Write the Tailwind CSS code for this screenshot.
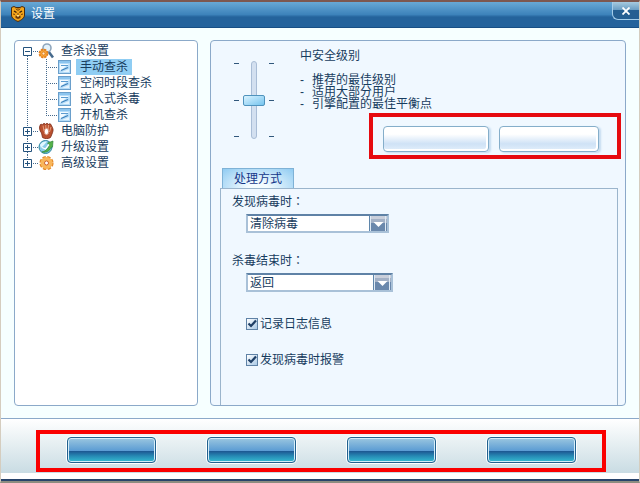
<!DOCTYPE html>
<html lang="zh-CN">
<head>
  <meta charset="UTF-8">
  <meta name="viewport" content="width=device-width, initial-scale=1">
  <title>设置</title>
  <script src="https://cdn.jsdelivr.net/npm/@tailwindcss/browser@4"></script>
</head>
<body class="flex min-h-screen flex-col border-t-2 border-r border-b-2 border-l border-t-[#7d5850] border-r-[#d5cdbf] border-b-[#8c8c80] border-l-[#d5cdbf] bg-[#f6ffff] font-['Liberation_Sans','Noto_Sans_CJK_SC',sans-serif] text-xs leading-4 text-[#173c5e]">

  <!-- SVG部品 -->
  <svg class="hidden">
    <symbol id="page" viewBox="0 0 13 14">
      <rect x=".5" y=".5" width="12" height="13" fill="#b5dcf8" stroke="#6a9fcb"/>
      <path d="M1 1h11v2H1z" fill="#8cc4ee"/>
      <path d="M2 4h9L2 11z" fill="#f2faff"/>
      <path d="M3 5.500h7" stroke="#5b9bd0"/>
      <path d="M3 10.500 10 7.500" stroke="#3c7fba" stroke-width="1.200"/>
      <path d="M11 9v3H4z" fill="#e6f4fd"/>
    </symbol>
    <symbol id="arrow" viewBox="0 0 18 15">
      <path d="M0 0h18v3H0z" fill="#c9cfdb"/>
      <path d="M0 3h18v4H0z" fill="#a3b1c6"/>
      <path d="M0 7h18v8H0z" fill="#6a88ac"/>
      <path d="M.5 0v15" stroke="#5f86ab"/>
      <path d="M1.500 0v15M16.500 0v15" stroke="#dfeaf4"/>
      <path d="M4.500 6h10l-5 5z" fill="#fff"/>
    </symbol>
    <symbol id="check" viewBox="0 0 12 12">
      <path d="M2.500 5.500 5 8l5-5.500" fill="none" stroke="#1f3f66" stroke-width="2.200"/>
    </symbol>
  </svg>

  <!-- タイトルバー -->
  <header class="flex h-[26px] items-start justify-between border-b border-[#174f85] bg-linear-to-b from-[#68a9d6] from-0% via-[#3d83bb] via-50% to-[#24639c] to-60%">
    <h1 class="flex items-center gap-1.5 pt-1 pl-2.5 text-white">
      <svg class="h-4 w-3.5" viewBox="0 0 14 16">
        <path d="M.5 1.500 3 .5l2 1h4l2-1 2.500 1V9c0 3-3 5-6.500 6.500C3.500 14 .5 12 .5 9z" fill="#f3a51c" stroke="#4b2a0c"/>
        <path d="m3 5 2.500 1.500M11 5 8.500 6.500" stroke="#3a1f08" stroke-width="1.400"/>
        <path d="M7 2v3M5 2.500l1 1.500M9 2.500 8 4M2 8l2 .5M12 8l-2 .5M7 7v2.500" stroke="#7a4208"/>
        <path d="M4.500 12V9.500L7 10.500l2.500-1V12L7 13z" fill="#6d3a0a"/>
        <path d="M6 9h2v1.500H6z" fill="#ffe28a"/>
      </svg>
      设置
    </h1>
    <button type="button" aria-label="关闭" class="flex h-[18px] w-[27px] items-center justify-center rounded-bl-md border-b border-l border-[#a4cdea] bg-linear-to-b from-[#a6cbe0] from-0% via-[#6c9fc4] via-45% to-[#255f92] to-50%">
      <svg class="size-2" viewBox="0 0 8 8"><path d="m.5.5 7 7m0-7-7 7" stroke="#fff" stroke-width="1.800"/></svg>
    </button>
  </header>

  <main class="flex flex-1 gap-3 px-[13px] pt-3 pb-3">

    <!-- ツリー -->
    <nav class="w-46 shrink-0 rounded border border-[#8ba9c9] bg-white pt-0.5 pl-2">
      <ul>
        <li>
          <div class="flex h-4 items-center">
            <button type="button" aria-label="折叠查杀设置">
              <svg class="h-4 w-[15px]" viewBox="0 0 15 16"><path d="M4.500 13v3M10 8.500h5" stroke="#45698c" stroke-dasharray="1 1"/><path d="M.5 4.500h8v8h-8zM2 8.500h5" fill="none" stroke="#24527d"/></svg>
            </button>
            <svg class="size-4" viewBox="0 0 16 16">
              <path d="m10.500 8.500 4.500 6" stroke="#476a8c" stroke-width="2.600"/>
              <circle cx="9" cy="5" r="4" fill="#e4f2fb" stroke="#8fa6bd" stroke-width="1.600"/>
              <circle cx="5.500" cy="10.500" r="4" fill="#f7a638" stroke="#e57f1d" stroke-width="1.800" stroke-dasharray="2.200 .95"/>
              <circle cx="5.500" cy="10.500" r="1.500" fill="#ffe9c4" stroke="#d56c14" stroke-width=".7"/>
            </svg>
            <span class="pl-[7px]">查杀设置</span>
          </div>
          <ul>
            <li class="flex h-4 items-center">
              <svg class="h-4 w-[35px]" viewBox="0 0 35 16"><path d="M4.500 0v16M23.500 0v16M25 8.500h9" stroke="#45698c" stroke-dasharray="1 1"/></svg>
              <svg class="h-3.5 w-[13px]"><use href="#page"/></svg>
              <a href="#" class="ml-[5px] bg-[#8fcdf3] px-1">手动查杀</a>
            </li>
            <li class="flex h-4 items-center">
              <svg class="h-4 w-[35px]" viewBox="0 0 35 16"><path d="M4.500 0v16M23.500 0v16M25 8.500h9" stroke="#45698c" stroke-dasharray="1 1"/></svg>
              <svg class="h-3.5 w-[13px]"><use href="#page"/></svg>
              <a href="#" class="ml-[5px] px-1">空闲时段查杀</a>
            </li>
            <li class="flex h-4 items-center">
              <svg class="h-4 w-[35px]" viewBox="0 0 35 16"><path d="M4.500 0v16M23.500 0v16M25 8.500h9" stroke="#45698c" stroke-dasharray="1 1"/></svg>
              <svg class="h-3.5 w-[13px]"><use href="#page"/></svg>
              <a href="#" class="ml-[5px] px-1">嵌入式杀毒</a>
            </li>
            <li class="flex h-4 items-center">
              <svg class="h-4 w-[35px]" viewBox="0 0 35 16"><path d="M4.500 0v16M23.500 0v9M25 8.500h9" stroke="#45698c" stroke-dasharray="1 1"/></svg>
              <svg class="h-3.5 w-[13px]"><use href="#page"/></svg>
              <a href="#" class="ml-[5px] px-1">开机查杀</a>
            </li>
          </ul>
        </li>
        <li class="flex h-4 items-center">
          <button type="button" aria-label="展开电脑防护">
            <svg class="h-4 w-[15px]" viewBox="0 0 15 16"><path d="M4.500 0v4M4.500 13v3M10 8.500h5" stroke="#45698c" stroke-dasharray="1 1"/><path d="M.5 4.500h8v8h-8zM2 8.500h5M4.500 6v5" fill="none" stroke="#24527d"/></svg>
          </button>
          <svg class="size-4" viewBox="0 0 16 16">
            <path d="M2 2.500C2 1 4 1 4.500 2 5 0 7 0 7.500 1.500 8 0 10 0 10.500 1.500 11 .5 13 .5 13.500 2.500L15 6c.5 2-1 5-2.500 8.500-2 1.500-6 1.500-8 0L3.500 10C1.500 8 1 4 2 2.500z" fill="#b9502f" stroke="#7c2b18" stroke-width=".8"/>
            <path d="M5 2.500 6 8M7.800 2v5M10.500 2 10 7.500M13 4l-1.500 5" stroke="#f0b090" stroke-width=".8"/>
            <ellipse cx="8.500" cy="8.500" rx="2.200" ry="3.300" fill="#fff" stroke="#d78b70"/>
          </svg>
          <span class="pl-[7px]">电脑防护</span>
        </li>
        <li class="flex h-4 items-center">
          <button type="button" aria-label="展开升级设置">
            <svg class="h-4 w-[15px]" viewBox="0 0 15 16"><path d="M4.500 0v4M4.500 13v3M10 8.500h5" stroke="#45698c" stroke-dasharray="1 1"/><path d="M.5 4.500h8v8h-8zM2 8.500h5M4.500 6v5" fill="none" stroke="#24527d"/></svg>
          </button>
          <svg class="size-4" viewBox="0 0 16 16">
            <circle cx="7.500" cy="8" r="6.500" fill="#8acbe8" stroke="#2b86a0"/>
            <path d="M2 6c1.500-3 4.500-4 7-3.500L6 6 3 9z" fill="#e2f7ff"/>
            <path d="M4 13c4 1 8-1 9-4.500l1.500-.5.5-6L9.500 4l1.500 1.500C11 9 8 12 4 13z" fill="#55b149" stroke="#2f8538" stroke-width=".7"/>
            <path d="M4 8.500 7.500 10 11 5.500" fill="none" stroke="#fff" stroke-width="1.300"/>
          </svg>
          <span class="pl-[7px]">升级设置</span>
        </li>
        <li class="flex h-4 items-center">
          <button type="button" aria-label="展开高级设置">
            <svg class="h-4 w-[15px]" viewBox="0 0 15 16"><path d="M4.500 0v4M10 8.500h5" stroke="#45698c" stroke-dasharray="1 1"/><path d="M.5 4.500h8v8h-8zM2 8.500h5M4.500 6v5" fill="none" stroke="#24527d"/></svg>
          </button>
          <svg class="size-4" viewBox="0 0 16 16">
            <circle cx="8.500" cy="8" r="6" fill="none" stroke="#e58a2a" stroke-width="2.200" stroke-dasharray="3.300 1.412"/>
            <circle cx="8.500" cy="8" r="4" fill="#fff" stroke="#f9b65a" stroke-width="4"/>
            <circle cx="8.500" cy="8" r="2" fill="#fff" stroke="#c9501a" stroke-width=".9"/>
          </svg>
          <span class="pl-[7px]">高级设置</span>
        </li>
      </ul>
    </nav>

    <!-- 設定パネル -->
    <form class="flex flex-1 flex-col rounded border border-[#8ba9c9] bg-[#f0f8ff]">
      <section class="flex">
        <div class="flex items-center gap-1 self-start pt-5 pl-[23px]">
          <div class="flex h-[74px] flex-col justify-between">
            <i class="h-px w-[5px] bg-[#31587c]"></i><i class="h-px w-[5px] bg-[#31587c]"></i><i class="h-px w-[5px] bg-[#31587c]"></i>
          </div>
          <input type="range" aria-label="安全级别" min="0" max="2" value="1" class="h-[78px] w-[22px] appearance-none bg-transparent [writing-mode:vertical-lr] [&::-webkit-slider-runnable-track]:h-[78px] [&::-webkit-slider-runnable-track]:w-1.5 [&::-webkit-slider-runnable-track]:rounded-sm [&::-webkit-slider-runnable-track]:border [&::-webkit-slider-runnable-track]:border-[#a9bdd6] [&::-webkit-slider-runnable-track]:bg-[#d3e0f0] [&::-webkit-slider-thumb]:-ml-[9px] [&::-webkit-slider-thumb]:h-[11px] [&::-webkit-slider-thumb]:w-[22px] [&::-webkit-slider-thumb]:appearance-none [&::-webkit-slider-thumb]:rounded-xs [&::-webkit-slider-thumb]:border [&::-webkit-slider-thumb]:border-[#4f93bd] [&::-webkit-slider-thumb]:bg-linear-to-br [&::-webkit-slider-thumb]:from-[#d9f3ff] [&::-webkit-slider-thumb]:to-[#74c4ee]">
          <div class="flex h-[74px] flex-col justify-between">
            <i class="h-px w-[5px] bg-[#31587c]"></i><i class="h-px w-[5px] bg-[#31587c]"></i><i class="h-px w-[5px] bg-[#31587c]"></i>
          </div>
        </div>
        <div class="flex flex-1 flex-col pt-[7px] pl-[26px]">
          <h2>中安全级别</h2>
          <ul class="mt-2.5 leading-3">
            <li class="flex"><span class="w-3">-</span>推荐的最佳级别</li>
            <li class="flex"><span class="w-3">-</span>适用大部分用户</li>
            <li class="flex"><span class="w-3">-</span>引擎配置的最佳平衡点</li>
          </ul>
          <div class="mt-[3px] mr-1 flex gap-2.5 self-end border-4 border-[#e60a0f] pt-[9px] pr-[18px] pb-[3px] pl-2.5">
            <button type="button" aria-label="自定义级别" class="h-[26px] w-[106px] rounded border border-[#85aeca] bg-linear-to-b from-white from-30% via-[#cfe2f6] via-70% to-[#e2effb] shadow-[inset_-1px_-1px_0_1px_#fff,2px_1px_2px_#c5dcf0]"></button>
            <button type="button" aria-label="默认级别" class="h-[26px] w-[100px] rounded border border-[#85aeca] bg-linear-to-b from-white from-30% via-[#cfe2f6] via-70% to-[#e2effb] shadow-[inset_-1px_-1px_0_1px_#fff,2px_1px_2px_#c5dcf0]"></button>
          </div>
        </div>
      </section>

      <!-- 処理方式タブ -->
      <section class="mt-[9px] mr-[7px] ml-[9px] flex flex-1 flex-col">
        <h2 class="ml-0.5 flex h-5 w-[72px] items-center justify-center border border-b-0 border-[#7fb2d6] bg-[radial-gradient(ellipse_at_bottom,#f4fcff_20%,#8fcbf2_100%)] text-[#15378a]">处理方式</h2>
        <div class="flex flex-1 flex-col items-start border border-b-0 border-[#9bb5cc] pl-[11px]">
          <label for="onfound" class="mt-[5px]">发现病毒时<span lang="zh-TW" class="font-['Noto_Sans_CJK_TC',sans-serif] leading-3">：</span></label>
          <div class="relative mt-1 ml-3.5">
            <select id="onfound" class="block h-[19px] w-[143px] appearance-none border-2 border-[#a9c1d8] border-t-[#5f82a6] bg-white pl-0.5">
              <option>清除病毒</option>
            </select>
            <svg class="pointer-events-none absolute top-0.5 right-0.5 h-[15px] w-[18px]"><use href="#arrow"/></svg>
          </div>
          <label for="onfinish" class="mt-5">杀毒结束时<span lang="zh-TW" class="font-['Noto_Sans_CJK_TC',sans-serif] leading-3">：</span></label>
          <div class="relative mt-1 ml-3.5">
            <select id="onfinish" class="block h-[19px] w-[147px] appearance-none border-2 border-[#a9c1d8] border-t-[#5f82a6] bg-white pl-0.5">
              <option>返回</option>
            </select>
            <svg class="pointer-events-none absolute top-0.5 right-0.5 h-[15px] w-[18px]"><use href="#arrow"/></svg>
          </div>
          <label class="relative mt-6 ml-3.5 flex items-center gap-0.5">
            <input type="checkbox" checked class="peer size-3 appearance-none border border-[#5f82a6] bg-linear-to-br from-white to-[#a9c9e6]">
            <svg class="pointer-events-none absolute left-0 hidden size-3 peer-checked:block"><use href="#check"/></svg>
            记录日志信息
          </label>
          <label class="relative mt-5 ml-3.5 flex items-center gap-0.5">
            <input type="checkbox" checked class="peer size-3 appearance-none border border-[#5f82a6] bg-linear-to-br from-white to-[#a9c9e6]">
            <svg class="pointer-events-none absolute left-0 hidden size-3 peer-checked:block"><use href="#check"/></svg>
            发现病毒时报警
          </label>
        </div>
      </section>
    </form>
  </main>

  <!-- 下部ボタン -->
  <footer class="border-t border-b-2 border-t-[#8ba9c9] border-b-[#27446b] bg-white pb-1.5">
    <div class="bg-linear-to-b from-white to-[#c9dce3] pt-[11px] pr-[33px] pb-px pl-[35px]">
      <div class="flex justify-between border-4 border-[#fa0000] pt-[3px] pr-[26px] pb-[5px] pl-[27px]">
        <button type="button" aria-label="确定" class="h-[26px] w-[89px] rounded border border-[#22618f] bg-[linear-gradient(#9bc7e0,#5a9bd3_54%,#1d5a94_56%,#2689b4_75%,#35bcd2)] shadow-[0_0_0_1px_#fff,inset_0_0_0_1px_#d5edf8]"></button>
        <button type="button" aria-label="取消" class="h-[26px] w-[89px] rounded border border-[#22618f] bg-[linear-gradient(#9bc7e0,#5a9bd3_54%,#1d5a94_56%,#2689b4_75%,#35bcd2)] shadow-[0_0_0_1px_#fff,inset_0_0_0_1px_#d5edf8]"></button>
        <button type="button" aria-label="应用" class="h-[26px] w-[89px] rounded border border-[#22618f] bg-[linear-gradient(#9bc7e0,#5a9bd3_54%,#1d5a94_56%,#2689b4_75%,#35bcd2)] shadow-[0_0_0_1px_#fff,inset_0_0_0_1px_#d5edf8]"></button>
        <button type="button" aria-label="帮助" class="h-[26px] w-[89px] rounded border border-[#22618f] bg-[linear-gradient(#9bc7e0,#5a9bd3_54%,#1d5a94_56%,#2689b4_75%,#35bcd2)] shadow-[0_0_0_1px_#fff,inset_0_0_0_1px_#d5edf8]"></button>
      </div>
    </div>
  </footer>
</body>
</html>
